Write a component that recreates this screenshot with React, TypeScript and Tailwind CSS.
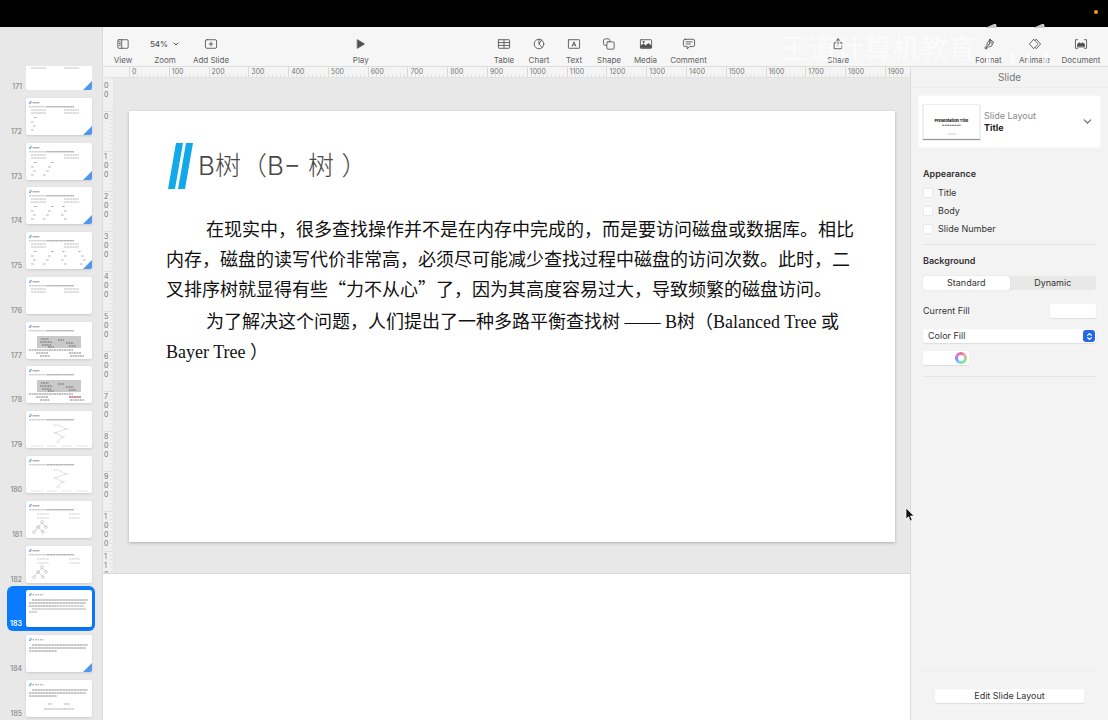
import { useState } from "react"
import type { ReactNode } from "react"
import { ChevronDown, ChevronsUpDown } from "lucide-react"

const Icon = ({ children }: { children: ReactNode }) => (
  <svg
    viewBox="0 0 16 14"
    className="h-3 w-3.5"
    fill="none"
    stroke="currentColor"
    strokeWidth="1"
    strokeLinejoin="round"
    strokeLinecap="round"
    aria-hidden="true"
  >
    {children}
  </svg>
)

const icons = {
  view: (
    <Icon>
      <rect x="2" y="2" width="12" height="10" rx="1.2" />
      <path d="M6.5 2v10M3.5 4.5h1.4M3.5 6.5h1.4M3.5 8.5h1.4" />
    </Icon>
  ),
  add: (
    <Icon>
      <rect x="1.5" y="2" width="13" height="10" rx="1.5" />
      <path d="M8 4.8v4.4M5.8 7h4.4" />
    </Icon>
  ),
  play: (
    <Icon>
      <path d="M4 2.2 12 7l-8 4.8z" fill="currentColor" />
    </Icon>
  ),
  table: (
    <Icon>
      <rect x="1.5" y="2" width="13" height="10" rx="0.6" />
      <path d="M1.5 5.3h13M1.5 8.6h13M8 2v10" />
    </Icon>
  ),
  chart: (
    <Icon>
      <circle cx="8" cy="7" r="5.6" />
      <path d="M8 1.4V7l3.8 4.2M8 7l3-4.6" />
    </Icon>
  ),
  text: (
    <Icon>
      <rect x="1.5" y="2" width="13" height="10" rx="0.6" />
      <path d="M6 9.5 8 4.5l2 5M6.7 8h2.6" />
    </Icon>
  ),
  shape: (
    <Icon>
      <path d="M5 8.5H3.5a2 2 0 0 1-2-2v-3A2.5 2.5 0 0 1 4 1h3a2 2 0 0 1 2 2v1" />
      <rect x="5.5" y="4.5" width="8.5" height="8.5" rx="1.2" />
    </Icon>
  ),
  media: (
    <Icon>
      <rect x="1.5" y="2" width="13" height="10" rx="0.8" />
      <path d="M2 11V9l3-2 2.5 2L11 6.5 14 9v2.5H2z" fill="currentColor" />
      <circle cx="5" cy="4.6" r="0.7" fill="currentColor" />
    </Icon>
  ),
  comment: (
    <Icon>
      <path d="M3.5 1.5h9a2 2 0 0 1 2 2V8a2 2 0 0 1-2 2h-4L6 12.8V10H3.5a2 2 0 0 1-2-2V3.5a2 2 0 0 1 2-2z" />
      <path d="M4.5 4.5h7M4.5 7h5" />
    </Icon>
  ),
  share: (
    <Icon>
      <path d="M5.5 5.5h-2v7h9v-7h-2M8 9V1M5.8 3 8 1l2.2 2" />
    </Icon>
  ),
  format: (
    <Icon>
      <path d="M9 1.5 13.5 5 12 6.8l-1 2.7-3.5 1-3 2.5L3 11.8l2.5-3L6 5.500 8 3.8zM8 3.8l4 3M9.5 1.8l-1 5.7" />
      <path d="m4.5 12 3.5-5M9.8 2.5l3 2.4" />
    </Icon>
  ),
  animate: (
    <Icon>
      <path d="M6.5 1.5 1.5 7l5 5.5L8 11M6.5 1.5 8 3M9.5 1.5l5 5.5-5 5.5L8 11M9.5 1.5 8 3" />
      <path d="m8 3 3.6 4L8 11" strokeDasharray="1 1.2" />
    </Icon>
  ),
  document: (
    <Icon>
      <path d="M4 2H1.5v10H4M12 2h2.5v10H12" />
      <path d="M4 10V7l2-1.5L8 7l2-1.5L12 7v3z" fill="currentColor" />
    </Icon>
  ),
}

const ToolButton = ({ label, width, children }: { label: string; width: string; children: ReactNode }) => (
  <button className={`flex flex-col items-center gap-1 text-[8px] leading-3 text-[#616161] ${width}`}>
    <span className="flex h-3 items-center text-[#505050]">{children}</span>
    <span className="whitespace-nowrap">{label}</span>
  </button>
)

const Toolbar = () => (
  <header className="flex h-10 shrink-0 items-end justify-between border-b border-[#dedede] bg-[#f6f6f6] pr-1">
    <div className="flex">
      <ToolButton label="View" width="w-10">{icons.view}</ToolButton>
      <ToolButton label="Zoom" width="w-11">
        <span className="flex items-center gap-1 font-medium">
          54% <ChevronDown size={8} strokeWidth={3} />
        </span>
      </ToolButton>
      <ToolButton label="Add Slide" width="w-12">{icons.add}</ToolButton>
    </div>
    <ToolButton label="Play" width="w-10">{icons.play}</ToolButton>
    <div className="flex">
      <ToolButton label="Table" width="w-[35px]">{icons.table}</ToolButton>
      <ToolButton label="Chart" width="w-[35px]">{icons.chart}</ToolButton>
      <ToolButton label="Text" width="w-[35px]">{icons.text}</ToolButton>
      <ToolButton label="Shape" width="w-[35px]">{icons.shape}</ToolButton>
      <ToolButton label="Media" width="w-[38px]">{icons.media}</ToolButton>
      <ToolButton label="Comment" width="w-12">{icons.comment}</ToolButton>
    </div>
    <ToolButton label="Share" width="w-10">{icons.share}</ToolButton>
    <div className="flex pl-0.5">
      <ToolButton label="Format" width="w-[45px]">{icons.format}</ToolButton>
      <ToolButton label="Animate" width="w-[47px]">{icons.animate}</ToolButton>
      <ToolButton label="Document" width="w-[46px]">{icons.document}</ToolButton>
    </div>
  </header>
)

type Kind = "nodes" | "table" | "figure" | "path" | "tree" | "text" | "diagram"

interface SlideItem {
  id: number
  kind: Kind
  nodes?: number
  corner?: boolean
}

const slides: SlideItem[] = [
  { id: 171, kind: "nodes", nodes: 0, corner: true },
  { id: 172, kind: "nodes", nodes: 1, corner: true },
  { id: 173, kind: "nodes", nodes: 2, corner: true },
  { id: 174, kind: "nodes", nodes: 3, corner: true },
  { id: 175, kind: "nodes", nodes: 4, corner: true },
  { id: 176, kind: "table" },
  { id: 177, kind: "figure" },
  { id: 178, kind: "figure" },
  { id: 179, kind: "path" },
  { id: 180, kind: "path" },
  { id: 181, kind: "tree" },
  { id: 182, kind: "tree" },
  { id: 183, kind: "text" },
  { id: 184, kind: "text", corner: true },
  { id: 185, kind: "diagram" },
]

const nodeColumns = [
  "M8 19.5h3M5 24h3M7 28h3M5 32h3",
  "M25 19.5h3M22 24h3M20 28h3M17 32h3",
  "M36 19.5h3M38 24h3M35 28h3M38 32h3",
  "M52 19.5h3M55 24h3M57 28h3M54 32h3",
]

const Thumbnail = ({ slide }: { slide: SlideItem }) => {
  const { kind } = slide
  const prose = kind === "text" || kind === "diagram"
  return (
    <svg viewBox="0 0 66 37" className="h-[37px] w-[66px] shrink-0 rounded-xs bg-white shadow-sm" aria-hidden="true">
      <path d="M4.5 3 3.3 6M5.5 3 4.3 6" stroke="#3f8fe0" strokeWidth="0.7" />
      <g stroke="#555" strokeWidth="0.9" strokeDasharray="2.5 0.3" opacity="0.7" fill="none">
        <path d={prose ? "M6.5 4.8h11" : "M6.5 4.8h7"} strokeDasharray={prose ? "1.5 1" : "none"} />
        {!prose && <path d="M3 8.8h18" opacity="0.6" />}
        {!prose && <path d="M21 8.8h27" />}
        {(kind === "nodes" || kind === "table") && <path d="M5 12h15M38 12h15M5 15h15M38 15h15" opacity="0.6" />}
        {kind === "nodes" && nodeColumns.slice(0, slide.nodes).map((d) => <path key={d} d={d} opacity="0.7" />)}
        {prose && <path d="M6 10h56M3 13h57M3 16h28" />}
        {slide.id === 183 && <path d="M31 16h27M6 19h54M3 22h8" strokeWidth="0.7" />}
        {kind === "diagram" && <path d="M22 24h4M38 24h6M18 29h30" opacity="0.7" />}
        {kind === "tree" && <path d="M11 13h12M43 13h11M11 17h12M43 17h11" opacity="0.4" />}
      </g>
      {kind === "figure" && (
        <g>
          <rect x="11" y="14" width="44" height="12" fill="#c9c9c9" />
          <path
            d="M15 17h8M32 18h6M14 20h12M40 21h8M16 23h9M22 25h6M43 24h7"
            stroke="#555"
            strokeWidth="0.9"
            strokeDasharray="1 0.6"
          />
          <path d="M3 28h44M10 31h12M43 31h12M14 34h10M44 34h14" stroke="#777" strokeWidth="0.9" strokeDasharray="2 0.5" />
          {slide.id === 178 && <path d="M43 31h12" stroke="#d66" strokeWidth="0.9" />}
        </g>
      )}
      {kind === "path" && (
        <g fill="none" stroke="#ccc" strokeWidth="0.6">
          <path d="M27 14h5l8 4-11 4 8 4-5 4M38 18h5M27 22h3M35 26h4M30 31h4" />
          <path d="M5 35h12M21 35h10M36 35h10M50 35h12" strokeDasharray="2 0.5" />
        </g>
      )}
      {kind === "tree" && (
        <g fill="none" stroke="#aaa" strokeWidth="0.5">
          <path d="m16 22-4 4-3 4M16 22l4 4M12 26l5 5" />
          <circle cx="16" cy="21" r="1.4" />
          <circle cx="12" cy="26" r="1.4" />
          <circle cx="20" cy="26" r="1.4" />
          <circle cx="8" cy="31" r="1.4" />
          <circle cx="17" cy="31" r="1.4" />
        </g>
      )}
      {slide.corner && <path d="M66 28v9h-9z" fill="#4f96ee" />}
    </svg>
  )
}

const Navigator = () => {
  const [current, setCurrent] = useState(183)
  return (
    <nav aria-label="Slides" className="w-[103px] shrink-0 border-r border-[#dcdcdc] bg-[#e8e8e8] pt-[39px] pb-[3px]">
      <ul className="flex h-full flex-col justify-between">
        {slides.map((slide, index) => (
          <li key={slide.id} className="flex px-[7px]">
            <button
              onClick={() => setCurrent(slide.id)}
              className={`-my-1 flex items-end gap-1 rounded-md py-1 pr-[3px] text-[7px] leading-[6px] ${
                slide.id === current ? "bg-[#0a7aff] font-semibold text-white" : "text-[#777]"
              }`}
            >
              <span className="w-[15px] text-right">{slide.id}</span>
              <span className={`flex items-end ${index === 0 ? "h-6 overflow-hidden" : ""}`}>
                <Thumbnail slide={slide} />
              </span>
            </button>
          </li>
        ))}
      </ul>
    </nav>
  )
}

const HorizontalRuler = () => (
  <div className="flex h-[11px] shrink-0 overflow-hidden border-b border-[#e2e2e2] bg-[#f4f4f4] pl-[26px] text-[7px] leading-[9px] text-[#777]">
    {Array.from({ length: 20 }, (_, i) => (
      <div
        key={i}
        className={`min-w-0 border-l border-[#dadada] bg-[repeating-linear-gradient(90deg,transparent_0_3px,#e2e2e2_3px_4px)] bg-[length:100%_3px] bg-bottom bg-no-repeat pl-0.5 ${i < 19 ? "flex-[5]" : "flex-[3]"}`}
      >
        {i * 100}
      </div>
    ))}
  </div>
)

const VerticalRuler = () => (
  <div className="w-[11px] shrink-0 border-r border-[#e4e4e4] bg-[#f0f0f0] text-[7px] leading-[9px] text-[#777]">
    <div className="flex h-full flex-col overflow-hidden [contain:size]">
      <div className="flex h-[33px] shrink-0 flex-col pt-[3px] pl-px">
        <span>0</span>
        <span>0</span>
      </div>
      {Array.from({ length: 12 }, (_, i) => (
        <div
          key={i}
          className="flex h-10 shrink-0 flex-col border-t border-[#dedede] bg-[repeating-linear-gradient(transparent_0_3px,#e2e2e2_3px_4px)] bg-[length:3px_100%] bg-right bg-no-repeat pl-px"
        >
          {String(i * 100)
            .slice(0, i > 10 ? 3 : 4)
            .split("")
            .map((digit, j) => (
              <span key={j}>{digit}</span>
            ))}
        </div>
      ))}
    </div>
  </div>
)

const Slide = () => (
  <article className="aspect-video bg-white pt-8 pr-[39px] pl-[37px] text-lg leading-[30px] text-[#111] shadow-[0_1px_3px_#aaa]">
    <h1 className="flex items-center gap-1 font-['Inter','Noto_Sans_CJK_SC',sans-serif] text-[26px] leading-[46px] font-light text-[#484848]">
      <svg viewBox="0 0 28 46" className="h-[46px] w-7" fill="#12a9ea" aria-hidden="true">
        <path d="M10 0h7L9 46H2zM20 0h7l-8 46h-7z" />
      </svg>
      B树（B− 树 ）
    </h1>
    <p className="mt-6 indent-10 font-['Noto_Sans_CJK_SC',sans-serif]">
      在现实中，很多查找操作并不是在内存中完成的，而是要访问磁盘或数据库。相比内存，磁盘的读写代价非常高，必须尽可能减少查找过程中磁盘的访问次数。此时，二叉排序树就显得有些“力不从心”了，因为其高度容易过大，导致频繁的磁盘访问。
    </p>
    <p className="mt-1 indent-10 font-['Liberation_Serif','Noto_Sans_CJK_SC',serif]">
      为了解决这个问题，人们提出了一种多路平衡查找树 —— B树（Balanced Tree 或 Bayer Tree ）
    </p>
  </article>
)

const Inspector = () => {
  const [mode, setMode] = useState("Standard")
  return (
    <aside className="flex w-[198px] shrink-0 flex-col border-l border-[#dcdcdc] bg-[#f3f3f3] text-[9px] leading-3 text-[#333]">
      <h2 className="border-b border-[#ececec] py-1 text-center text-[10px] text-[#777]">Slide</h2>
      <button className="mx-2 mt-2 flex items-center gap-1 bg-white px-1 py-2 text-left shadow-[0_0_3px_#fff]">
        <span className="h-[35px] w-[57px] border border-[#eee] bg-white shadow-[0_1px_1px_#999]">
          <svg viewBox="0 0 57 35" className="w-full" aria-hidden="true">
            <text x="28.5" y="18" textAnchor="middle" fontSize="4" fontWeight="800" fill="#222">
              Presentation Title
            </text>
            <path d="M19 21h19" stroke="#555" strokeDasharray="2 0.5" />
            <path d="M25 30h8" stroke="#ccc" />
          </svg>
        </span>
        <span className="flex-1 text-[#888]">
          Slide Layout
          <strong className="block font-bold text-[#222]">Title</strong>
        </span>
        <ChevronDown size={13} className="mr-0.5 text-[#666]" />
      </button>

      <fieldset className="mx-3 mt-[21px] border-b border-[#e4e4e4] pb-[3px]">
        <legend className="mb-[7px] font-semibold">Appearance</legend>
        {["Title", "Body", "Slide Number"].map((name) => (
          <label key={name} className="mb-1.5 flex items-center gap-[5px]">
            <input type="checkbox" className="size-2.5 appearance-none rounded-xs border border-[#eaeaea] bg-white" />
            {name}
          </label>
        ))}
      </fieldset>

      <section className="mx-3 border-b border-[#e4e4e4] pt-2.5 pb-[11px]">
        <h3 className="font-semibold">Background</h3>
        <div className="mt-[9px] flex rounded-xs bg-[#e8e8e8]">
          {["Standard", "Dynamic"].map((name) => (
            <button
              key={name}
              onClick={() => setMode(name)}
              className={`h-3.5 flex-1 rounded-xs ${mode === name ? "bg-white shadow-[0_0_1px_#aaa]" : ""}`}
            >
              {name}
            </button>
          ))}
        </div>
        <div className="mt-3.5 flex items-center justify-between">
          Current Fill
          <button aria-label="Current fill colour" className="h-3.5 w-[46px] rounded-xs bg-white shadow-[0_1px_1px_#ddd]" />
        </div>
        <div className="relative mt-[11px] flex">
          <select
            aria-label="Fill type"
            className="h-3.5 w-full appearance-none rounded-xs bg-white pl-[5px] leading-3 shadow-[0_1px_1px_#ddd]"
          >
            <option>Color Fill</option>
            <option>Gradient Fill</option>
            <option>Image Fill</option>
          </select>
          <span className="pointer-events-none absolute top-px right-px flex size-3 items-center justify-center rounded-[3px] bg-[#2468e8] text-white">
            <ChevronsUpDown size={9} strokeWidth={3} />
          </span>
        </div>
        <button
          aria-label="Choose colour"
          className="mt-2 flex h-3.5 w-[46px] items-center justify-end rounded-xs bg-white pr-0.5 shadow-[0_1px_1px_#ddd]"
        >
          <span className="flex size-3 items-center justify-center rounded-full bg-[conic-gradient(#f07080,#f0a8c0,#98e078,#80e8a8,#80d0f0,#8a8af8,#e070f0,#f07080)]">
            <span className="size-1.5 rounded-full bg-white" />
          </span>
        </button>
      </section>

      <div className="mx-3 mt-auto border-t border-[#ececec] px-3 pt-[18px] pb-[17px]">
        <button className="h-3.5 w-full rounded-xs bg-white shadow-[0_1px_1px_#ddd]">Edit Slide Layout</button>
      </div>
    </aside>
  )
}

const Watermark = () => (
  <div
    aria-hidden="true"
    className="pointer-events-none absolute top-6 right-[58px] flex items-start gap-2 font-['Noto_Sans_CJK_SC',sans-serif] text-[28px] leading-[46px] text-white/60"
  >
    <span>王道计算机教育</span>
    <svg viewBox="0 0 66 42" className="h-[42px] w-[66px]" fill="white">
      <path d="m1 4 9-4h2l1 4zM49 4l9-4h2l1 4z" fill="#c8c8c8" />
      <path d="M2 29h5v10H2zM26 29h5v10h-5zM43 29h3v10h-3zM58 29h6v10h-6z" opacity="0.6" />
    </svg>
  </div>
)

const App = () => (
  <div className="relative flex h-screen min-h-[720px] flex-col overflow-hidden bg-white font-['Inter','Noto_Sans_CJK_SC',sans-serif]">
    <div className="flex h-[27px] shrink-0 justify-end bg-black pt-2.5 pr-2.5">
      <span className="size-1 rounded-full bg-[#f09a20]" />
    </div>
    <div className="flex min-h-0 flex-1">
      <Navigator />
      <div className="flex min-w-0 flex-1 flex-col">
        <Toolbar />
        <div className="flex min-h-0 flex-1">
          <main className="flex min-w-0 flex-1 flex-col">
            <HorizontalRuler />
            <div className="flex shrink-0 border-b border-[#d8d8d8] bg-[#e8e8e8]">
              <VerticalRuler />
              <div className="min-w-0 flex-1 px-[15px] pt-[33px] pb-[31px]">
                <Slide />
              </div>
            </div>
            <textarea aria-label="Presenter notes" className="w-full flex-1 resize-none bg-white p-3 text-xs outline-none" />
          </main>
          <Inspector />
        </div>
      </div>
    </div>
    <Watermark />
    <svg viewBox="0 0 10 15" className="pointer-events-none absolute top-[507px] left-[905px] h-[15px] w-2.5" aria-hidden="true">
      <path d="M1 1v11l2.5-2.3L5.2 14l2-.9-1.8-4H9z" fill="#111" stroke="white" strokeWidth="0.7" />
    </svg>
  </div>
)

export default App
